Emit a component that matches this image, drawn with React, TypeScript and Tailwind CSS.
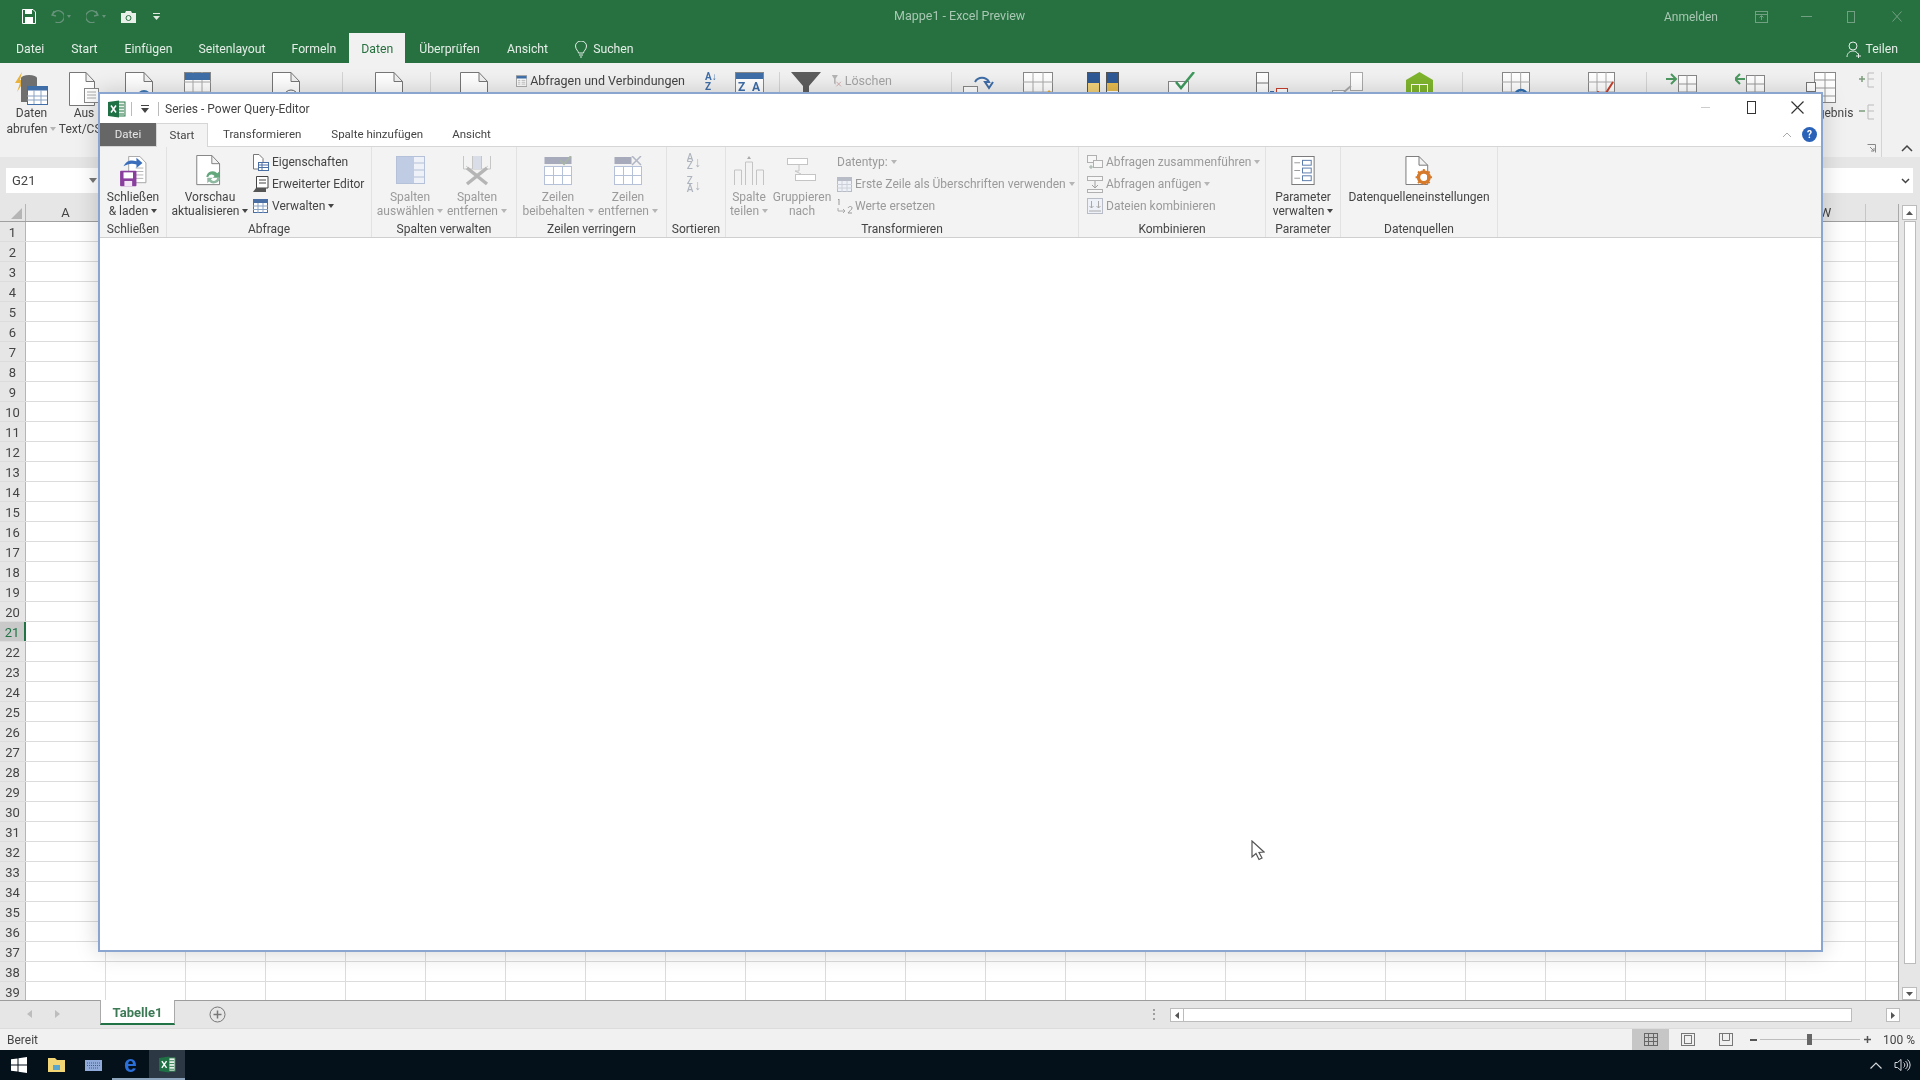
import React from 'react';

const rows = Array.from({ length: 39 }, (_, i) => i + 1);
const cols = 'ABCDEFGHIJKLMNOPQRSTUVW'.split('');

function Caret({ light }: { light?: boolean }) {
  return (
    <svg width="6" height="4" viewBox="0 0 6 4" className="inline-block ml-[3px] mb-[1px]">
      <path d="M0 0h6L3 4z" fill={light ? '#b5b5b5' : '#444'} />
    </svg>
  );
}

function ExcelLogo({ size = 18 }: { size?: number }) {
  return (
    <svg width={size} height={size} viewBox="0 0 18 18">
      <rect x="7" y="2" width="10" height="14" fill="#e8f0ea" stroke="#2f7d4f" />
      <path d="M11 5h5M11 8h5M11 11h5M11 14h5" stroke="#2f7d4f" />
      <path d="M0 2l11-1.5v17L0 16z" fill="#1f7145" />
      <path d="M3 5.5l5 7M8 5.5l-5 7" stroke="#fff" strokeWidth="1.5" />
    </svg>
  );
}

function DocShape({ w = 28, h = 34, stroke = '#777' }: { w?: number; h?: number; stroke?: string }) {
  return (
    <path
      d={`M.5 .5H${w - 9}L${w - 0.5} 9.5V${h - 0.5}H.5z M${w - 9} .5V9.5H${w - 0.5}`}
      fill="#fff"
      stroke={stroke}
    />
  );
}

function TopDoc({ accent }: { accent: React.ReactNode }) {
  return (
    <svg width="30" height="36" viewBox="0 0 30 36" className="shrink-0">
      <DocShape />
      {accent}
    </svg>
  );
}

function TopGrid({ children, w = 30 }: { children?: React.ReactNode; w?: number }) {
  return (
    <svg width={w} height="34" viewBox={`0 0 ${w} 34`} className="shrink-0">
      <rect x=".5" y=".5" width={w - 1} height="33" fill="#fff" stroke="#888" />
      <path d={`M0 10H${w}M0 20H${w}M${w / 3} 0V34M${(2 * w) / 3} 0V34`} stroke="#aaa" />
      {children}
    </svg>
  );
}

function BackSep() {
  return <div className="w-px h-[66px] bg-[#d4d4d4] shrink-0" />;
}

function BackRibbon() {
  return (
    <div className="h-[94px] bg-[#f1f1f1] flex items-start pt-[9px] shrink-0 text-[#444]">
      <div className="w-[63px] flex flex-col items-center shrink-0">
        <svg width="36" height="36" viewBox="0 0 36 36">
          <path d="M8 0L1 11h5l-3 9 8-12H6z" fill="#e8b23c" />
          <ellipse cx="15" cy="6" rx="8" ry="3" fill="#6f6f6f" />
          <rect x="7" y="6" width="16" height="24" fill="#6f6f6f" />
          <rect x="13.500" y="14.500" width="20" height="18" fill="#fff" stroke="#3f6ea8" />
          <rect x="13.500" y="14.500" width="20" height="4" fill="#3f6ea8" />
          <path d="M13 24h20M13 28h20M20 18v14M27 18v14" stroke="#8aa3c2" />
        </svg>
        <div className="text-[12px] leading-[16px] -mt-[3px] text-center whitespace-nowrap">
          Daten
          <br />
          abrufen
          <Caret light />
        </div>
      </div>
      <div className="w-[42px] flex flex-col items-center shrink-0">
        <svg width="30" height="36" viewBox="0 0 30 36">
          <DocShape w={26} />
          <rect x="15.500" y="16.500" width="14" height="14" fill="#fff" stroke="#888" />
          <path d="M18 20h9M18 23h9M18 26h9" stroke="#aaa" />
        </svg>
        <div className="text-[12px] leading-[16px] -mt-[3px] text-center whitespace-nowrap">
          Aus
          <br />
          Text/CSV
        </div>
      </div>
      <div className="ml-[20px]">
        <TopDoc accent={<circle cx="19" cy="25" r="7" fill="#3f78b5" />} />
      </div>
      <div className="ml-[29px]">
        <TopGrid w={27}>
          <rect x="1" y="1" width="25" height="7" fill="#3f6ea8" />
        </TopGrid>
      </div>
      <div className="ml-[61px]">
        <TopDoc accent={<circle cx="19" cy="25" r="7" fill="#fff" stroke="#666" />} />
      </div>
      <div className="ml-[40px]">
        <BackSep />
      </div>
      <div className="ml-[32px]">
        <TopDoc accent={<rect x="10" y="20" width="16" height="12" fill="#e0b64e" />} />
      </div>
      <div className="ml-[25px]">
        <BackSep />
      </div>
      <div className="ml-[29px]">
        <TopDoc accent={<rect x="12" y="24" width="12" height="8" fill="#6b9a7a" />} />
      </div>
      <div className="ml-[26px] w-[169px] flex items-center gap-[3px] shrink-0">
        <svg width="18" height="18" viewBox="0 0 18 18">
          <rect x=".5" y=".5" width="17" height="17" fill="#fff" stroke="#777" />
          <rect x="1" y="1" width="16" height="4" fill="#3f6ea8" />
          <path d="M3 8h4M3 11h4M3 14h4M9 8h6M9 11h6M9 14h6" stroke="#999" />
        </svg>
        <span className="text-[12.500px] leading-[16px] whitespace-nowrap">Abfragen und Verbindungen</span>
      </div>
      <div className="ml-[20px] w-[15px] text-[10px] leading-[10px] text-[#3f6ea8] font-bold flex flex-col shrink-0">
        <span>A↓</span>
        <span>Z</span>
      </div>
      <div className="ml-[15px]">
        <svg width="29" height="34" viewBox="0 0 29 34" className="shrink-0">
          <rect x=".5" y=".5" width="28" height="33" fill="#fff" stroke="#888" />
          <rect x="1" y="1" width="27" height="6" fill="#3f6ea8" />
          <text x="3" y="19" fontSize="12" fontWeight="700" fill="#3f6ea8" fontFamily="Roboto">Z</text>
          <text x="17" y="19" fontSize="12" fontWeight="700" fill="#3f6ea8" fontFamily="Roboto">A</text>
        </svg>
      </div>
      <div className="ml-[15px]">
        <BackSep />
      </div>
      <div className="ml-[11px]">
        <svg width="30" height="34" viewBox="0 0 30 34">
          <path d="M0 0h30L18 14v20l-6-4V14z" fill="#5d5d5d" />
        </svg>
      </div>
      <div className="ml-[10px] w-[61px] flex items-center gap-[3px] shrink-0">
        <svg width="14" height="18" viewBox="0 0 14 18">
          <path d="M1 1h8L6 6v8L4 12V6z" fill="#b5b5b5" />
          <path d="M7 10l6 6M13 10l-6 6" stroke="#c99" />
        </svg>
        <span className="text-[12.500px] leading-[16px] text-[#a5a5a5]">Löschen</span>
      </div>
      <div className="ml-[59px]">
        <BackSep />
      </div>
      <div className="ml-[11px]">
        <svg width="32" height="34" viewBox="0 0 32 34">
          <path d="M12 10a8 8 0 0 1 14 0l-4 0 4 6 4-6" fill="none" stroke="#3f6ea8" strokeWidth="2" />
          <rect x=".5" y="14.500" width="14" height="18" fill="#fff" stroke="#888" />
          <rect x="17.500" y="20.500" width="14" height="12" fill="#fff" stroke="#888" />
        </svg>
      </div>
      <div className="ml-[28px]">
        <TopGrid>
          <path d="M18 28l8-10 2 2-8 10z" fill="#e2a93a" />
        </TopGrid>
      </div>
      <div className="ml-[34px]">
        <svg width="32" height="34" viewBox="0 0 32 34">
          <rect x=".5" y=".5" width="12" height="33" fill="#f3d27a" stroke="#555" />
          <rect x="1" y="1" width="11" height="10" fill="#2f5a96" />
          <rect x="19.500" y=".5" width="12" height="33" fill="#fff" stroke="#555" />
          <rect x="20" y="1" width="11" height="10" fill="#2f5a96" />
          <rect x="20" y="11" width="11" height="8" fill="#e6bb4f" />
        </svg>
      </div>
      <div className="ml-[49px]">
        <svg width="28" height="34" viewBox="0 0 28 34">
          <rect x=".5" y="9.500" width="20" height="16" fill="#fff" stroke="#888" />
          <path d="M8 10l5 6L26 0" fill="none" stroke="#3f9a5d" strokeWidth="2.500" />
          <circle cx="21" cy="28" r="5" fill="#fff" stroke="#c8402c" strokeWidth="2" />
        </svg>
      </div>
      <div className="ml-[60px]">
        <svg width="32" height="34" viewBox="0 0 32 34">
          <rect x=".5" y=".5" width="12" height="33" fill="#fff" stroke="#777" />
          <path d="M0 11h12M0 22h12" stroke="#777" />
          <path d="M14 20h4" stroke="#3f6ea8" strokeWidth="2" />
          <rect x="20.500" y="16.500" width="11" height="10" fill="#fff" stroke="#c8402c" />
        </svg>
      </div>
      <div className="ml-[44px]">
        <svg width="31" height="34" viewBox="0 0 31 34">
          <rect x="18.500" y=".5" width="12" height="18" fill="#fff" stroke="#aaa" />
          <rect x=".5" y="18.500" width="12" height="14" fill="#fff" stroke="#aaa" />
          <path d="M12 20l7-6" stroke="#aaa" strokeWidth="2" />
        </svg>
      </div>
      <div className="ml-[43px]">
        <svg width="27" height="34" viewBox="0 0 27 34">
          <path d="M0 8L13.500 0 27 8v26H0z" fill="#7fb52d" />
          <rect x="5.500" y="12.500" width="16" height="20" fill="none" stroke="#fff" />
          <path d="M13.500 12v20M5 22h16" stroke="#fff" />
        </svg>
      </div>
      <div className="ml-[29px]">
        <BackSep />
      </div>
      <div className="ml-[39px]">
        <TopGrid w={28}>
          <circle cx="19" cy="24" r="6" fill="none" stroke="#2f6fb3" strokeWidth="2.500" />
        </TopGrid>
      </div>
      <div className="ml-[58px]">
        <TopGrid w={27}>
          <path d="M2 30l8-10 6 4 9-14" fill="none" stroke="#c8402c" strokeWidth="2" />
        </TopGrid>
      </div>
      <div className="ml-[31px]">
        <BackSep />
      </div>
      <div className="ml-[19px]">
        <svg width="32" height="34" viewBox="0 0 32 34">
          <path d="M0 7h9M5 2l5 5-5 5" fill="none" stroke="#4c9a60" strokeWidth="2" />
          <rect x="12.500" y="3.500" width="18" height="29" fill="#fff" stroke="#888" />
          <path d="M12 12h18M12 20h18M21 3v29" stroke="#999" />
        </svg>
      </div>
      <div className="ml-[37px]">
        <svg width="30" height="34" viewBox="0 0 30 34">
          <path d="M10 7H1M5 2L0 7l5 5" fill="none" stroke="#4c9a60" strokeWidth="2" />
          <rect x="11.500" y="3.500" width="18" height="29" fill="#fff" stroke="#888" />
          <path d="M11 12h18M11 20h18M20 3v29" stroke="#999" />
        </svg>
      </div>
      <div className="w-[70px] flex flex-col items-center shrink-0 ml-[21px]">
        <svg width="30" height="36" viewBox="0 0 30 36">
          <rect x="8.500" y=".5" width="21" height="30" fill="#fff" stroke="#888" />
          <path d="M8 8h21M8 16h21M8 24h21M19 0v30" stroke="#999" />
          <rect x=".5" y="10.500" width="9" height="9" fill="#fff" stroke="#777" />
        </svg>
        <div className="text-[12px] leading-[16px] -mt-[3px] whitespace-nowrap">Teilergebnis</div>
      </div>
      <div className="flex flex-col gap-[14px] shrink-0 -mt-[1px] ml-[3px]">
        <svg width="16" height="18" viewBox="0 0 16 18">
          <path d="M0 8h6M3 5v6" stroke="#7c9b7c" strokeWidth="1.500" />
          <path d="M9 2h6M9 2v14h6M9 8h6" fill="none" stroke="#bbb" />
        </svg>
        <svg width="16" height="18" viewBox="0 0 16 18">
          <path d="M0 8h6" stroke="#7c9b7c" strokeWidth="1.500" />
          <path d="M9 2h6M9 2v14h6M9 8h6" fill="none" stroke="#bbb" />
        </svg>
      </div>
      <div className="ml-[6px] relative flex items-end h-[85px] shrink-0 gap-[19px]">
        <svg width="10" height="10" viewBox="0 0 10 10" className="absolute -left-[14px] bottom-[3px]">
          <path d="M.5 .5h8v8M3 3l4 4M4 7h3V4" fill="none" stroke="#888" />
        </svg>
        <div className="w-px h-[85px] bg-[#d4d4d4]" />
        <svg width="12" height="8" viewBox="0 0 12 8" className="mb-[5px]">
          <path d="M1 7l5-5 5 5" fill="none" stroke="#444" strokeWidth="1.500" />
        </svg>
      </div>
    </div>
  );
}

function FormulaBar() {
  return (
    <div className="h-[47px] bg-[#e6e6e6] flex items-start pt-[11px] pl-[6px] pr-[7px] shrink-0">
      <div className="w-[94px] h-[25px] bg-white flex items-center pl-[6px] pr-[3px] justify-between text-[13px] text-[#444]">
        G21
        <svg width="8" height="5" viewBox="0 0 8 5">
          <path d="M0 0h8L4 5z" fill="#777" />
        </svg>
      </div>
      <div className="flex-1 h-[25px] bg-white ml-[30px] flex items-center justify-end pr-[3px]">
        <svg width="9" height="6" viewBox="0 0 9 6">
          <path d="M1 1l3.500 3.500L8 1" fill="none" stroke="#444" strokeWidth="1.500" />
        </svg>
      </div>
    </div>
  );
}

function SheetGrid() {
  return (
    <div className="h-[796px] flex bg-[#e6e6e6] overflow-hidden shrink-0">
      <div className="w-[1899px] flex flex-col border-r border-[#a9a9a9] shrink-0 bg-white">
        <div className="h-[18px] flex bg-[#e6e6e6] border-b border-[#a0a0a0] shrink-0">
          <div className="w-[26px] border-r border-[#b5b5b5] flex items-end justify-end pr-[3px] pb-[2px] shrink-0">
            <svg width="11" height="11" viewBox="0 0 11 11">
              <path d="M11 0v11H0z" fill="#b5b5b5" />
            </svg>
          </div>
          {cols.map((c) => (
            <div
              key={c}
              className="w-[80px] border-r border-[#c6c6c6] shrink-0 flex items-center justify-center text-[13px] text-[#444]"
            >
              {c}
            </div>
          ))}
          <div className="flex-1" />
        </div>
        {rows.map((r) => (
          <div key={r} className="h-[20px] flex shrink-0 border-b border-[#dcdcdc]">
            <div
              className={
                r === 21
                  ? 'w-[26px] bg-[#c9c9c9] border-r-[2px] border-[#217346] text-[#217346] text-[13px] pt-[3px] flex items-center justify-center shrink-0'
                  : 'w-[26px] bg-[#e6e6e6] border-r border-[#b5b5b5] text-[#444] text-[13px] pt-[3px] flex items-center justify-center shrink-0'
              }
            >
              {r}
            </div>
            {cols.map((c) => (
              <div key={c} className="w-[80px] border-r border-[#dcdcdc] shrink-0" />
            ))}
          </div>
        ))}
      </div>
      <div className="flex-1 flex flex-col items-center pt-[1px]">
        <div className="w-[15px] h-[15px] bg-white border border-[#bcbcbc] flex items-center justify-center shrink-0">
          <svg width="7" height="4" viewBox="0 0 7 4">
            <path d="M0 4h7L3.500 0z" fill="#555" />
          </svg>
        </div>
        <div className="w-[12px] h-[743px] bg-white border border-[#bcbcbc] mt-[1px] shrink-0" />
        <div className="mt-auto w-[15px] h-[13px] bg-white border border-[#bcbcbc] flex items-center justify-center shrink-0">
          <svg width="7" height="4" viewBox="0 0 7 4">
            <path d="M0 0h7L3.500 4z" fill="#555" />
          </svg>
        </div>
      </div>
    </div>
  );
}

function SheetTabs() {
  return (
    <div className="h-[28px] bg-[#e6e6e6] flex items-start border-t border-[#9d9d9d] shrink-0">
      <div className="w-[100px] h-[25px] flex items-center gap-[23px] pl-[27px] shrink-0">
        <svg width="5" height="8" viewBox="0 0 5 8">
          <path d="M5 0v8L0 4z" fill="#bdbdbd" />
        </svg>
        <svg width="5" height="8" viewBox="0 0 5 8">
          <path d="M0 0v8l5-4z" fill="#bdbdbd" />
        </svg>
      </div>
      <div className="w-[75px] h-[25px] bg-white border-x border-[#a9a9a9] border-b-2 border-b-[#217346] text-[13px] font-bold text-[#3c7a55] pt-[3px] flex items-center justify-center shrink-0 -mt-px">
        Tabelle1
      </div>
      <div className="ml-[34px] h-[26px] flex items-center shrink-0">
        <svg width="17" height="17" viewBox="0 0 17 17">
          <circle cx="8.500" cy="8.500" r="7.500" fill="none" stroke="#777" />
          <path d="M8.500 4.500v8M4.500 8.500h8" stroke="#777" strokeWidth="1.500" />
        </svg>
      </div>
      <div className="ml-[922px] w-[4px] h-[26px] flex items-center text-[12px] text-[#777] shrink-0">⋮</div>
      <div className="ml-[18px] h-[14px] mt-[7px] w-[730px] flex shrink-0 items-stretch">
        <div className="w-[14px] bg-white border border-[#bcbcbc] flex items-center justify-center shrink-0">
          <svg width="4" height="7" viewBox="0 0 4 7">
            <path d="M4 0v7L0 3.500z" fill="#555" />
          </svg>
        </div>
        <div className="w-[668px] bg-white border-y border-r border-[#bcbcbc] shrink-0" />
        <div className="flex-1" />
        <div className="w-[14px] bg-white border border-[#bcbcbc] flex items-center justify-center shrink-0">
          <svg width="4" height="7" viewBox="0 0 4 7">
            <path d="M0 0v7l4-3.500z" fill="#555" />
          </svg>
        </div>
      </div>
    </div>
  );
}

function StatusBar() {
  return (
    <div className="h-[22px] bg-[#f1f1f1] border-t border-[#dcdcdc] flex items-center pl-[7px] text-[12px] text-[#444] shrink-0">
      <span>Bereit</span>
      <div className="ml-auto flex items-center h-full">
        <div className="w-[37px] h-full bg-[#c6c6c6] flex items-center justify-center">
          <svg width="14" height="13" viewBox="0 0 14 13">
            <rect x=".5" y=".5" width="13" height="12" fill="none" stroke="#666" />
            <path d="M0 4.500h14M0 8.500h14M4.500 0v13M9.500 0v13" stroke="#666" />
          </svg>
        </div>
        <div className="w-[38px] flex items-center justify-center">
          <svg width="14" height="13" viewBox="0 0 14 13">
            <rect x=".5" y=".5" width="13" height="12" fill="none" stroke="#777" />
            <rect x="3.500" y="2.500" width="7" height="8" fill="none" stroke="#777" />
          </svg>
        </div>
        <div className="w-[38px] flex items-center justify-center">
          <svg width="14" height="13" viewBox="0 0 14 13">
            <rect x=".5" y=".5" width="13" height="12" fill="none" stroke="#777" />
            <path d="M3.500 0v7.500h7V0" fill="none" stroke="#777" />
          </svg>
        </div>
        <div className="w-[7px] h-[2px] bg-[#555] ml-[5px]" />
        <div className="w-[100px] h-px bg-[#bdbdbd] ml-[3px] relative flex items-center justify-center">
          <div className="w-[5px] h-[11px] bg-[#666] shrink-0 -ml-[2px]" />
        </div>
        <svg width="7" height="7" viewBox="0 0 7 7" className="ml-[4px]">
          <path d="M0 3.500h7M3.500 0v7" stroke="#555" strokeWidth="1.500" />
        </svg>
        <span className="ml-[12px] w-[37px] whitespace-nowrap">100 %</span>
      </div>
    </div>
  );
}

function Taskbar() {
  return (
    <div className="h-[30px] bg-[#04101a] flex items-stretch shrink-0">
      <div className="w-[37px] flex items-center justify-center shrink-0">
        <svg width="16" height="16" viewBox="0 0 16 16">
          <path d="M0 2.300L6.500 1.400V7.500H0zM7.500 1.300L16 0V7.500H7.500zM0 8.500H6.500V14.600L0 13.700zM7.500 8.500H16V16L7.500 14.700z" fill="#fff" />
        </svg>
      </div>
      <div className="w-[37px] ml-[1px] flex items-center justify-center shrink-0">
        <svg width="17" height="14" viewBox="0 0 17 14">
          <path d="M0 0h7l2 2h8v12H0z" fill="#f2d675" />
          <rect x="5" y="7" width="7" height="5" fill="#59a6cf" />
        </svg>
      </div>
      <div className="w-[37px] flex items-center justify-center shrink-0">
        <svg width="17" height="11" viewBox="0 0 17 11">
          <rect width="17" height="11" fill="#8fa9d8" />
          <path d="M2 3h13M2 5.500h13M4 8h9" stroke="#3a5a9a" strokeDasharray="1 1" />
        </svg>
      </div>
      <div className="w-[37px] flex items-center justify-center border-b-[2px] border-[#8ea6bd] shrink-0">
        <span className="text-[23px] leading-[23px] font-bold text-[#2b6fd8] font-['Liberation_Sans',sans-serif]">e</span>
      </div>
      <div className="w-[36px] bg-[#2c3843] flex items-center justify-center border-b-[2px] border-[#8ea6bd] shrink-0">
        <ExcelLogo size={17} />
      </div>
      <div className="ml-auto flex items-center gap-[12px] pr-[9px]">
        <svg width="12" height="7" viewBox="0 0 12 7">
          <path d="M.5 6.500L6 1l5.500 5.500" fill="none" stroke="#d5d9dc" strokeWidth="1.200" />
        </svg>
        <svg width="17" height="14" viewBox="0 0 17 14">
          <path d="M1 4.500h2.500L7 1.500v11l-3.500-3H1z M9.500 4.500a3 3 0 0 1 0 5M11.500 3a5 5 0 0 1 0 8M13.500 1.500a7 7 0 0 1 0 11" fill="none" stroke="#d5d9dc" />
        </svg>
      </div>
    </div>
  );
}

function BigButton({
  icon,
  lines,
  w,
  light,
  caret,
}: {
  icon: React.ReactNode;
  lines: string[];
  w: string;
  light?: boolean;
  caret?: boolean;
}) {
  return (
    <div className={`${w} shrink-0 flex flex-col items-center`}>
      <div className="h-[39px] pt-[5px] flex items-start justify-center">{icon}</div>
      <div className={light ? 'text-[#9a9a9a] text-center leading-[14px] whitespace-nowrap' : 'text-[#444] text-center leading-[14px] whitespace-nowrap'}>
        {lines[0]}
        <br />
        {lines[1]}
        {caret && <Caret light={light} />}
      </div>
    </div>
  );
}

function SmallItem({
  icon,
  text,
  light,
  caret,
  gap,
}: {
  icon?: React.ReactNode;
  text: string;
  light?: boolean;
  caret?: boolean;
  gap?: string;
}) {
  return (
    <div className={`h-[22px] flex items-center whitespace-nowrap ${gap ?? 'gap-[3px]'} ${light ? 'text-[#9a9a9a]' : 'text-[#444]'}`}>
      {icon}
      <span>
        {text}
        {caret && <Caret light={light} />}
      </span>
    </div>
  );
}

function Group({
  width,
  label,
  children,
}: {
  width: string;
  label: string;
  children: React.ReactNode;
}) {
  return (
    <div className={`${width} shrink-0 border-r border-[#e2e2e2] flex flex-col`}>
      <div className="flex-1 flex pt-[4px]">{children}</div>
      <div className="h-[17px] pt-[2px] text-center leading-[15px] whitespace-nowrap text-[#444]">{label}</div>
    </div>
  );
}

function PowerQueryWindow() {
  return (
    <div className="absolute left-[98px] top-[92px] w-[1725px] h-[860px] border-2 border-[#8aa5cf] bg-white shadow-[0_0_22px_rgba(0,0,0,0.18)] flex flex-col text-[12px]">
      <div className="h-[29px] flex items-center shrink-0">
        <div className="ml-[8px]">
          <ExcelLogo />
        </div>
        <div className="w-px h-[14px] bg-[#bbb] ml-[5px]" />
        <svg width="8" height="8" viewBox="0 0 8 8" className="ml-[9px]">
          <path d="M0 0h8v1H0zM0 3h8L4 8z" fill="#444" />
        </svg>
        <div className="w-px h-[14px] bg-[#bbb] ml-[9px]" />
        <span className="ml-[6px] text-[12px] text-[#444]">Series - Power Query-Editor</span>
        <div className="ml-auto flex items-center pr-[17px] pb-[2px]">
          <div className="w-[9px] h-px bg-[#ccc]" />
          <div className="w-[9px] h-[13px] border-[1.5px] border-[#333] ml-[37px]" />
          <svg width="13" height="13" viewBox="0 0 13 13" className="ml-[35px]">
            <path d="M.5 .5l12 12M12.500 .5l-12 12" stroke="#333" strokeWidth="1.200" />
          </svg>
        </div>
      </div>
      <div className="h-[24px] flex items-stretch border-b border-[#d6d6d6] shrink-0 text-[11.500px] text-[#444]">
        <div className="w-[56px] bg-[#666] text-[#e6e6e6] flex items-center justify-center">Datei</div>
        <div className="w-[52px] h-[25px] bg-[#f3f3f3] border-x border-t border-[#d6d6d6] flex items-center justify-center">Start</div>
        <div className="ml-[15px] flex items-center whitespace-nowrap">Transformieren</div>
        <div className="ml-[30px] flex items-center whitespace-nowrap">Spalte hinzufügen</div>
        <div className="ml-[29px] flex items-center whitespace-nowrap">Ansicht</div>
        <div className="ml-auto flex items-center gap-[10px] pr-[4px]">
          <svg width="10" height="6" viewBox="0 0 10 6">
            <path d="M1 5l4-4 4 4" fill="none" stroke="#aaa" />
          </svg>
          <div className="w-[15px] h-[15px] rounded-full bg-[#2a62b8] text-white text-[10px] font-bold flex items-center justify-center">?</div>
        </div>
      </div>
      <div className="h-[91px] bg-[#f3f3f3] flex border-b border-[#cfcfcf] shrink-0">
        <Group width="w-[67px]" label="Schließen">
          <BigButton
            w="w-[66px]"
            caret
            lines={['Schließen', '& laden']}
            icon={
              <svg width="28" height="31" viewBox="0 0 32 36">
                <path d="M11 .5h13L31 8v23H11z" fill="#fff" stroke="#999" />
                <path d="M19 14h9M19 18h9M19 22h9M19 26h9" stroke="#aaa" />
                <path d="M5 12c3-7 9-8 15-6V2l7 6-7 6v-4c-5-2-10-1-15 2z" fill="#3a6ebd" />
                <rect x="1" y="17" width="19" height="18" rx="1" fill="#8a3f9e" />
                <rect x="5" y="19" width="11" height="7" fill="#fff" />
                <rect x="6" y="29" width="9" height="6" fill="#f3e6f5" />
              </svg>
            }
          />
        </Group>
        <Group width="w-[205px]" label="Abfrage">
          <div className="flex pl-[3px]">
            <BigButton
              w="w-[80px]"
              caret
              lines={['Vorschau', 'aktualisieren']}
              icon={
                <svg width="28" height="31" viewBox="0 0 30 34" className="-mt-[1px]">
                  <DocShape w={26} h={33} />
                  <path d="M11 24a7 7 0 0 1 12-4l2-2v7h-7l2-2a4 4 0 0 0-7 1z" fill="#63a77d" />
                  <path d="M26 25a7 7 0 0 1-12 4l-2 2v-6h6l-2 2a4 4 0 0 0 7-2z" fill="#8fb9a1" />
                </svg>
              }
            />
            <div className="flex flex-col ml-[3px]">
              <SmallItem
                text="Eigenschaften"
                icon={
                  <svg width="16" height="17" viewBox="0 0 16 17">
                    <path d="M.5 .5H6L10 4.500V15H.5z" fill="#fff" stroke="#777" />
                    <rect x="5.500" y="8.500" width="10" height="8" fill="#fff" stroke="#4a6fa5" />
                    <path d="M5 11h10M5 13.500h10M9 8v8" stroke="#4a6fa5" />
                  </svg>
                }
              />
              <SmallItem
                text="Erweiterter Editor"
                icon={
                  <svg width="16" height="17" viewBox="0 0 16 17">
                    <path d="M3.500 .5H15V12H3.500z" fill="#fff" stroke="#444" />
                    <path d="M6 4h7M6 7h7" stroke="#444" />
                    <path d="M0 16l3-4h10v4z" fill="#555" />
                  </svg>
                }
              />
              <SmallItem
                text="Verwalten"
                gap="gap-[4px]"
                caret
                icon={
                  <svg width="15" height="14" viewBox="0 0 15 14">
                    <rect x=".5" y=".5" width="14" height="13" fill="#fff" stroke="#4a6fa5" />
                    <rect x="1" y="1" width="13" height="3" fill="#4a6fa5" />
                    <path d="M0 7h15M0 10.500h15M5 4v10M10 4v10" stroke="#8aa3c2" />
                  </svg>
                }
              />
            </div>
          </div>
        </Group>
        <Group width="w-[145px]" label="Spalten verwalten">
          <div className="flex pl-[2px]">
            <BigButton
              w="w-[72px]"
              light
              caret
              lines={['Spalten', 'auswählen']}
              icon={
                <svg width="29" height="28" viewBox="0 0 29 28">
                  <rect x=".5" y=".5" width="28" height="27" fill="#eef1f7" stroke="#b4c1d8" />
                  <rect x="1" y="1" width="17" height="26" fill="#bfcce3" />
                  <path d="M18 7h10M18 14h10M18 21h10" stroke="#b4c1d8" />
                </svg>
              }
            />
            <BigButton
              w="w-[62px]"
              light
              caret
              lines={['Spalten', 'entfernen']}
              icon={
                <svg width="28" height="30" viewBox="0 0 28 30">
                  <path d="M.5 0v13h27V0M9.500 0v13M18.500 0v13" fill="none" stroke="#c6c6c6" />
                  <rect x="10" y="0" width="8" height="13" fill="#d8dde8" />
                  <path d="M3 10l11 8 11-8" fill="none" stroke="#d0d0d0" />
                  <path d="M4 28L24 12M4 12l20 16" stroke="#b5b5b5" strokeWidth="3.500" />
                </svg>
              }
            />
          </div>
        </Group>
        <Group width="w-[150px]" label="Zeilen verringern">
          <div className="flex pl-[3px]">
            <BigButton
              w="w-[76px]"
              light
              caret
              lines={['Zeilen', 'beibehalten']}
              icon={
                <svg width="28" height="29" viewBox="0 0 28 29">
                  <rect x=".5" y="1" width="27" height="7" fill="#a6aabb" />
                  <rect x=".5" y="10.500" width="27" height="18" fill="#fff" stroke="#b4c1d8" />
                  <path d="M0 19.500h28M9.500 10v19M18.500 10v19" stroke="#b4c1d8" />
                  <path d="M16 4l4 4 7-8" fill="none" stroke="#a9b4a9" strokeWidth="2" />
                </svg>
              }
            />
            <BigButton
              w="w-[64px]"
              light
              caret
              lines={['Zeilen', 'entfernen']}
              icon={
                <svg width="28" height="29" viewBox="0 0 28 29">
                  <rect x=".5" y="1" width="17" height="7" fill="#a6aabb" />
                  <rect x=".5" y="10.500" width="27" height="18" fill="#fff" stroke="#b4c1d8" />
                  <path d="M0 19.500h28M9.500 10v19M18.500 10v19" stroke="#b4c1d8" />
                  <path d="M18 0l9 9M27 0l-9 9" stroke="#b0b6c4" strokeWidth="1.500" />
                </svg>
              }
            />
          </div>
        </Group>
        <Group width="w-[59px]" label="Sortieren">
          <div className="w-[54px] flex flex-col items-center text-[#aeb4be] text-[10px] leading-[8px] font-medium gap-[7px] pt-[3px]">
            <div className="flex items-center gap-[1px]">
              <div className="flex flex-col">
                <span>A</span>
                <span>Z</span>
              </div>
              <span className="text-[14px]">↓</span>
            </div>
            <div className="flex items-center gap-[1px]">
              <div className="flex flex-col">
                <span>Z</span>
                <span>A</span>
              </div>
              <span className="text-[14px]">↓</span>
            </div>
          </div>
        </Group>
        <Group width="w-[353px]" label="Transformieren">
          <div className="flex pl-[3px]">
            <BigButton
              w="w-[40px]"
              light
              caret
              lines={['Spalte', 'teilen']}
              icon={
                <svg width="30" height="30" viewBox="0 0 30 30">
                  <path d="M.5 29V14h7v15M11.500 29V6h7v23M22.500 29V14h7v15" fill="none" stroke="#c4c4c4" />
                  <path d="M15 0l2 3h-4z" fill="#aaa" />
                </svg>
              }
            />
            <BigButton
              w="w-[66px]"
              light
              lines={['Gruppieren', 'nach']}
              icon={
                <svg width="30" height="24" viewBox="0 0 30 24" className="mt-[2px]">
                  <rect x=".5" y=".5" width="20" height="6" fill="#fff" stroke="#c4c4c4" />
                  <rect x="8.500" y="16.500" width="20" height="6" fill="#fff" stroke="#c4c4c4" />
                  <path d="M12 7v6H8l6 3" fill="none" stroke="#c4c4c4" />
                </svg>
              }
            />
            <div className="flex flex-col ml-[2px]">
              <SmallItem text="Datentyp:" light caret />
              <SmallItem
                text="Erste Zeile als Überschriften verwenden"
                light
                caret
                icon={
                  <svg width="15" height="15" viewBox="0 0 15 15">
                    <rect x=".5" y=".5" width="14" height="14" fill="#eef1f7" stroke="#b8bcc6" />
                    <rect x="1" y="1" width="13" height="3" fill="#b8bcc6" />
                    <path d="M0 7.500h15M0 11h15M5 4v11M10 4v11" stroke="#ccd0d8" />
                  </svg>
                }
              />
              <SmallItem
                text="Werte ersetzen"
                light
                gap="gap-[1px]"
                icon={
                  <svg width="17" height="16" viewBox="0 0 17 16">
                    <path d="M1 10v3h7M6 11l2 2-2 2" fill="none" stroke="#aaa" />
                    <path d="M2 1v6M1 2l1-1" fill="none" stroke="#999" />
                    <path d="M11 10c1-2 4-2 4 0 0 2-3 3-4 5h4" fill="none" stroke="#999" />
                  </svg>
                }
              />
            </div>
          </div>
        </Group>
        <Group width="w-[187px]" label="Kombinieren">
          <div className="flex flex-col pl-[8px]">
            <SmallItem
              text="Abfragen zusammenführen"
              light
              caret
              icon={
                <svg width="16" height="15" viewBox="0 0 16 15">
                  <rect x=".5" y=".5" width="9" height="7" fill="#f7f7f7" stroke="#b0b0b0" />
                  <rect x="6.500" y="5.500" width="9" height="7" fill="#f7f7f7" stroke="#b0b0b0" />
                  <path d="M2 12h4M4 10v4" stroke="#9fb0a4" />
                </svg>
              }
            />
            <SmallItem
              text="Abfragen anfügen"
              light
              caret
              icon={
                <svg width="16" height="17" viewBox="0 0 16 17">
                  <rect x=".5" y=".5" width="15" height="4" fill="#f7f7f7" stroke="#b0b0b0" />
                  <path d="M8 5v7M5 9l3 3 3-3" fill="none" stroke="#a0a0a0" />
                  <rect x=".5" y="13.500" width="15" height="3" fill="#f7f7f7" stroke="#b0b0b0" />
                </svg>
              }
            />
            <SmallItem
              text="Dateien kombinieren"
              light
              icon={
                <svg width="16" height="16" viewBox="0 0 16 16">
                  <rect x=".5" y=".5" width="15" height="15" fill="#eef1f7" stroke="#b8bcc6" />
                  <path d="M4.500 3v7M11.500 3v7M2.500 8l2 2 2-2M9.500 8l2 2 2-2M2 13h12" fill="none" stroke="#a8a8a8" />
                </svg>
              }
            />
          </div>
        </Group>
        <Group width="w-[75px]" label="Parameter">
          <BigButton
            w="w-[74px]"
            caret
            lines={['Parameter', 'verwalten']}
            icon={
              <svg width="24" height="29" viewBox="0 0 24 30">
                <rect x=".5" y=".5" width="23" height="29" fill="#fff" stroke="#777" />
                <path d="M3 7h6M3 15h6M3 23h6" stroke="#999" />
                <rect x="11.500" y="4.500" width="9" height="5" fill="#fff" stroke="#5a7bab" />
                <rect x="11.500" y="12.500" width="9" height="5" fill="#fff" stroke="#5a7bab" />
                <rect x="11.500" y="20.500" width="9" height="5" fill="#fff" stroke="#5a7bab" />
              </svg>
            }
          />
        </Group>
        <Group width="w-[157px]" label="Datenquellen">
          <BigButton
            w="w-[156px]"
            lines={['Datenquelleneinstellungen', '']}
            icon={
              <svg width="28" height="29" viewBox="0 0 28 30">
                <path d="M.5 .5H14L23 9.500V29.500H.5z M14 .5V9.500H23" fill="#fff" stroke="#777" />
                <circle cx="19" cy="22" r="5.500" fill="none" stroke="#d67a2b" strokeWidth="3.500" />
                <path d="M19 13.500v3M19 27.500v2.500M10.500 22h3M24.500 22h3M13 16l2 2M23 26l2 2M25 16l-2 2M15 26l-2 2" stroke="#d67a2b" strokeWidth="2" />
              </svg>
            }
          />
        </Group>
      </div>
      <div className="flex-1 bg-white" />
    </div>
  );
}

export default function App() {
  return (
    <div className="w-[1920px] h-[1080px] relative overflow-hidden flex flex-col bg-white font-['Roboto',sans-serif] blur-[0.35px]">
      <div className="h-[63px] bg-[#277040] flex flex-col shrink-0">
        <div className="h-[33px] flex items-center relative shrink-0">
          <svg width="14" height="15" viewBox="0 0 14 15" className="ml-[22px]">
            <path d="M.5 .5H11L13.500 3V14.500H.5z" fill="none" stroke="#fff" />
            <rect x="3" y="1" width="7" height="4" fill="#fff" />
            <rect x="3" y="8" width="8" height="6.500" fill="#fff" />
          </svg>
          <svg width="13" height="13" viewBox="0 0 13 13" className="ml-[15px]">
            <path d="M3 1L1 5l4 1M1.500 5a6 6 0 1 1 3 7" fill="none" stroke="#66937a" strokeWidth="1.300" />
          </svg>
          <svg width="4" height="3" viewBox="0 0 4 3" className="ml-[3px]">
            <path d="M0 0h4L2 3z" fill="#66937a" />
          </svg>
          <svg width="13" height="13" viewBox="0 0 13 13" className="ml-[15px]">
            <path d="M10 1l2 4-4 1M11.500 5a6 6 0 1 0-3 7" fill="none" stroke="#66937a" strokeWidth="1.300" />
          </svg>
          <svg width="4" height="3" viewBox="0 0 4 3" className="ml-[3px]">
            <path d="M0 0h4L2 3z" fill="#66937a" />
          </svg>
          <svg width="15" height="13" viewBox="0 0 15 13" className="ml-[15px]">
            <path d="M0 3h4l1-2h5l1 2h4v10H0z" fill="#e9efe9" />
            <circle cx="7.500" cy="8" r="2.500" fill="none" stroke="#277040" />
          </svg>
          <svg width="7" height="7" viewBox="0 0 7 7" className="ml-[17px]">
            <path d="M0 0h7v1H0zM0 3h7L3.500 7z" fill="#e0e8e2" />
          </svg>
          <span className="absolute left-[894px] text-[12.500px] text-[#a9c8b4] whitespace-nowrap">Mappe1 - Excel Preview</span>
          <div className="ml-auto flex items-center pr-[18px] text-[#8fb59d]">
            <span className="text-[12px] text-[#a9c8b4] whitespace-nowrap">Anmelden</span>
            <svg width="13" height="12" viewBox="0 0 13 12" className="ml-[37px]">
              <rect x=".5" y=".5" width="12" height="11" fill="none" stroke="#72a083" />
              <path d="M0 3.500h13M6.500 9V5M4.500 6.500l2-2 2 2" fill="none" stroke="#72a083" />
            </svg>
            <div className="w-[11px] h-px bg-[#72a083] ml-[33px]" />
            <div className="w-[8px] h-[12px] border border-[#72a083] ml-[35px]" />
            <svg width="10" height="11" viewBox="0 0 10 11" className="ml-[37px]">
              <path d="M.5 .5l9 10M9.500 .5l-9 10" stroke="#72a083" />
            </svg>
          </div>
        </div>
        <div className="h-[30px] flex items-stretch text-[12.250px] text-[#e4eee7] relative pl-[3px] shrink-0">
          <div className="px-[13px] pt-[2px] flex items-center">Datei</div>
          <div className="px-[14px] pt-[2px] flex items-center">Start</div>
          <div className="px-[13px] pt-[2px] flex items-center">Einfügen</div>
          <div className="px-[13px] pt-[2px] flex items-center">Seitenlayout</div>
          <div className="px-[13px] pt-[2px] flex items-center">Formeln</div>
          <div className="w-[56px] bg-[#f1f1f1] text-[#27703f] pt-[2px] flex items-center justify-center">Daten</div>
          <div className="px-[14px] pt-[2px] flex items-center">Überprüfen</div>
          <div className="px-[13px] pt-[2px] flex items-center">Ansicht</div>
          <div className="pl-[14px] pt-[2px] flex items-center gap-[6px]">
            <svg width="12" height="17" viewBox="0 0 12 17">
              <path d="M3.500 12c0-2-3-3.500-3-7a5.500 5 0 0 1 11 0c0 3.500-3 5-3 7zM4 14h4M5 16h2" fill="none" stroke="#e4eee7" />
            </svg>
            Suchen
          </div>
          <div className="ml-auto pr-[22px] pt-[2px] flex items-center gap-[5px]">
            <svg width="15" height="17" viewBox="0 0 15 17">
              <circle cx="7" cy="5" r="4" fill="none" stroke="#e4eee7" />
              <path d="M1 16c0-4 3-6 6-6 2 0 4 1 5 3M10 15h5M12.500 12.500v5" fill="none" stroke="#e4eee7" />
            </svg>
            <span>Teilen</span>
          </div>
        </div>
      </div>
      <BackRibbon />
      <FormulaBar />
      <SheetGrid />
      <SheetTabs />
      <StatusBar />
      <Taskbar />
      <PowerQueryWindow />
      <svg width="14" height="22" viewBox="0 0 14 22" className="absolute left-[1251px] top-[840px]">
        <path d="M1 1v16l4-3.500 3 6 3-1.500-3-5.500 5-.5z" fill="#fff" stroke="#555" strokeWidth="1.200" />
      </svg>
    </div>
  );
}
